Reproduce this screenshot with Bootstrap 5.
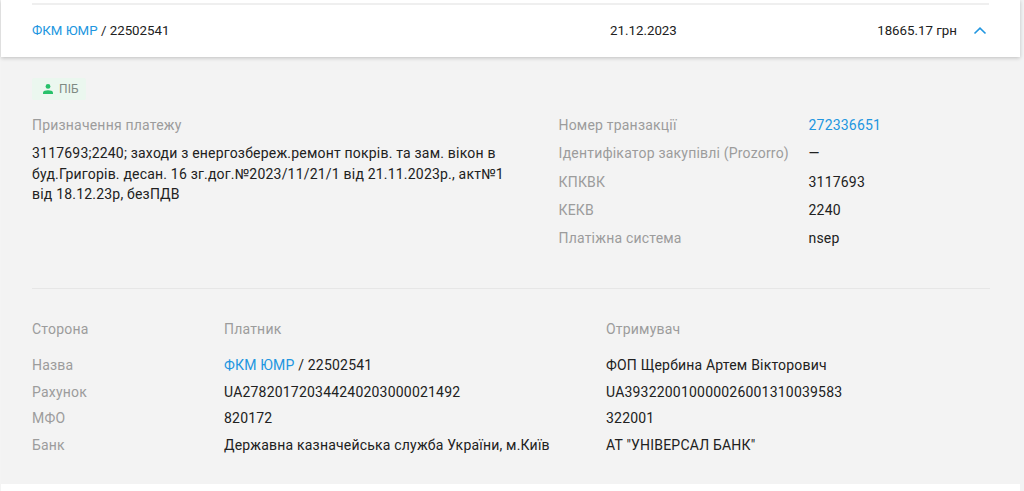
<!DOCTYPE html>
<html lang="uk">
<head>
<meta charset="utf-8">
<title>Транзакція</title>
<link href="https://cdn.jsdelivr.net/npm/bootstrap@5.3.0/dist/css/bootstrap.min.css" rel="stylesheet">
<style>
html,body{height:491px;overflow:hidden;background:#fff}
body{font-family:Roboto,"Liberation Sans",sans-serif;font-size:14px;line-height:20px;color:#212121;letter-spacing:.2px}
a{color:#2196e0;text-decoration:none}
.pagewrap{display:flex;height:491px}
.edge{width:4px;background:#f2f3f4;flex:none}
.lead-edge{width:1px;background:#f4f4f4;flex:none}
.main-col{width:1019px;flex:none}
.head-row{height:57px;padding:3px 31px 0;background:#fff;position:relative;box-shadow:0 1px 4px rgba(0,0,0,.22);z-index:2;font-size:13.3px;letter-spacing:0}
.head-inner{border-top:2px solid #efefef;height:54px;padding-right:2px}
.head-date{position:absolute;left:609px;top:21px}
.sum{margin-right:16px}
.panel{background:#f3f3f3;height:427px;padding:21px 31px 0}
.tag{width:54px;height:22px;background:#ebf7ef;color:#7f8a83;font-size:12px;border-radius:2px;padding-left:10px;gap:5px;letter-spacing:.1px}
.muted-t{color:#9c9c9c}
.purpose{width:472px;margin-top:8px;line-height:20.6px}
.left-block{width:526.5px;padding-top:15px}
.meta-row{height:28.3px;display:flex}
.meta-l{width:250px;color:#9c9c9c}
.top-block{height:194px}
.right-block{padding-top:15px}
.sep{border-top:1px solid #e6e6e6;width:958px}
.parties{padding-top:30px}
.p-row{display:flex;height:26.7px}
.p-row.first{height:36px}
.c1{width:192px;color:#9c9c9c}
.c2{width:382px}
</style>
</head>
<body>
<div class="pagewrap">
  <div class="lead-edge"></div>
  <div class="main-col">
    <div class="head-row">
      <div class="head-inner d-flex justify-content-between align-items-center">
        <div><a href="#">ФКМ ЮМР</a> / 22502541</div>
        <div class="head-date">21.12.2023</div>
        <div class="d-flex align-items-center">
          <span class="sum">18665.17 грн</span>
          <svg width="14" height="14" viewBox="0 0 14 14" aria-hidden="true"><path d="M1.5 9.5 7 4.2l5.5 5.3" fill="none" stroke="#2196e0" stroke-width="1.6"/></svg>
        </div>
      </div>
    </div>
    <div class="panel">
      <div class="top-block">
        <div class="tag d-flex align-items-center">
          <svg width="12" height="12" viewBox="0 0 12 12" aria-hidden="true"><circle cx="6" cy="3.4" r="2.4" fill="#27c16a"/><path d="M1 11V9.6C1 8 3.6 7.2 6 7.2s5 .8 5 2.4V11Z" fill="#27c16a"/></svg>
          <span>ПІБ</span>
        </div>
        <div class="d-flex">
          <div class="left-block">
            <div class="muted-t">Призначення платежу</div>
            <div class="purpose">3117693;2240; заходи з енергозбереж.ремонт покрів. та зам. вікон в буд.Григорів. десан. 16 зг.дог.№2023/11/21/1 від 21.11.2023р., акт№1 від 18.12.23р, безПДВ</div>
          </div>
          <div class="right-block">
            <div class="meta-row"><div class="meta-l">Номер транзакції</div><div><a href="#">272336651</a></div></div>
            <div class="meta-row"><div class="meta-l">Ідентифікатор закупівлі (Prozorro)</div><div>—</div></div>
            <div class="meta-row"><div class="meta-l">КПКВК</div><div>3117693</div></div>
            <div class="meta-row"><div class="meta-l">КЕКВ</div><div>2240</div></div>
            <div class="meta-row"><div class="meta-l">Платіжна система</div><div>nsep</div></div>
          </div>
        </div>
      </div>
      <div class="sep mt-3"></div>
      <div class="parties">
        <div class="p-row first"><div class="c1">Сторона</div><div class="c2 muted-t">Платник</div><div class="muted-t">Отримувач</div></div>
        <div class="p-row"><div class="c1">Назва</div><div class="c2"><a href="#">ФКМ ЮМР</a> / 22502541</div><div>ФОП Щербина Артем Вікторович</div></div>
        <div class="p-row"><div class="c1">Рахунок</div><div class="c2">UA278201720344240203000021492</div><div>UA393220010000026001310039583</div></div>
        <div class="p-row"><div class="c1">МФО</div><div class="c2">820172</div><div>322001</div></div>
        <div class="p-row"><div class="c1">Банк</div><div class="c2">Державна казначейська служба України, м.Київ</div><div>АТ "УНІВЕРСАЛ БАНК"</div></div>
      </div>
    </div>
  </div>
  <div class="edge"></div>
</div>
<script src="https://cdn.jsdelivr.net/npm/bootstrap@5.3.0/dist/js/bootstrap.bundle.min.js"></script>
</body>
</html>
